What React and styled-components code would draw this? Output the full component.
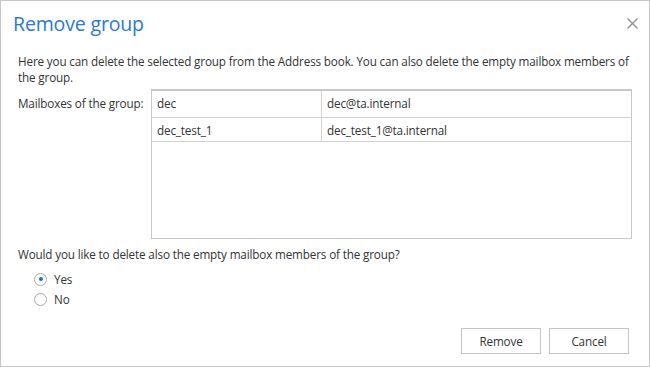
import React from 'react'
import styled, { createGlobalStyle } from 'styled-components'

const Global = createGlobalStyle`
  html, body {
    margin: 0;
    padding: 0;
    background: #ffffff;
  }
  * {
    box-sizing: border-box;
  }
`;

const Dialog = styled.div`
  width: 650px;
  height: 367px;
  border: 1px solid #c6c6c6;
  background: #fff;
  display: flex;
  flex-direction: column;
  font-family: 'Open Sans', 'Noto Sans', sans-serif;
  color: #333;
  position: relative;
`;

const Header = styled.div`
  display: flex;
  align-items: flex-start;
  justify-content: space-between;
  padding: 9px 10px 0 12px;
  height: 52px;
`;

const Title = styled.h1`
  margin: 0;
  font-size: 19.5px;
  font-weight: 400;
  line-height: 28px;
  color: #2b79cf;
  letter-spacing: -0.15px;
`;

const Close = styled.button`
  border: none;
  background: transparent;
  padding: 0;
  margin-top: 8px;
  width: 12px;
  height: 12px;
  cursor: pointer;
  display: flex;
`;

const Body = styled.div`
  flex: 1;
  padding: 0 17px;
  font-size: 11.7px;
  letter-spacing: -0.15px;
  line-height: 16px;
  display: flex;
  flex-direction: column;
`;

const Text = styled.p`
  margin: 0;
`;

const FieldRow = styled.div`
  display: grid;
  grid-template-columns: 133px 1fr;
  margin-top: 4px;
`;

const Label = styled.div`
  padding-top: 6px;
`;

const Table = styled.div`
  height: 150px;
  border: 1px solid #c8c8c8;
  border-top-width: 2px;
`;

const Row = styled.div`
  display: grid;
  grid-template-columns: 169px 1fr;
  height: ${p => p.$h}px;
  border-bottom: 1px solid #d2d2d2;
`;

const Cell = styled.div`
  padding: 4px 5px 0;
  border-left: ${p => (p.$first ? 'none' : '1px solid #d2d2d2')};
`;

const Question = styled(Text)`
  margin-top: 7px;
`;

const Radios = styled.div`
  display: flex;
  flex-direction: column;
  gap: 4px;
  padding-left: 16px;
  margin-top: 9px;
`;

const RadioRow = styled.label`
  display: flex;
  align-items: center;
  gap: 7px;
  height: 16px;
`;

const Circle = styled.span`
  width: 13px;
  height: 13px;
  border-radius: 50%;
  border: 1px solid #a8a8a8;
  display: flex;
  align-items: center;
  justify-content: center;
  &::after {
    content: '';
    width: 4px;
    height: 4px;
    border-radius: 50%;
    background: ${p => (p.$on ? '#1a73c8' : 'transparent')};
  }
`;

const Footer = styled.div`
  display: flex;
  justify-content: flex-end;
  gap: 8px;
  padding: 0 20px 12px;
`;

const Button = styled.button`
  width: 80px;
  height: 26px;
  border: 1px solid #c4c4c4;
  background: #fff;
  font-family: 'Open Sans', 'Noto Sans', sans-serif;
  font-size: 11.7px;
  letter-spacing: -0.15px;
  color: #333;
  cursor: pointer;
`;

const mailboxes = [
  { name: 'dec', mail: 'dec@ta.internal', h: 27 },
  { name: 'dec_test_1', mail: 'dec_test_1@ta.internal', h: 24 },
];

const App = () => {
  return (
    <>
      <Global />
      <Dialog>
        <Header>
          <Title>Remove group</Title>
          <Close aria-label="Close">
            <svg width="11" height="11" viewBox="0 0 11 11">
              <path d="M0.5 0.5 L10.5 10.5 M10.5 0.5 L0.5 10.5" stroke="#8a8a8a" strokeWidth="1.2" fill="none" />
            </svg>
          </Close>
        </Header>
        <Body>
          <Text>
            Here you can delete the selected group from the Address book. You can also delete the empty mailbox members of
            the group.
          </Text>
          <FieldRow>
            <Label>Mailboxes of the group:</Label>
            <Table>
              {mailboxes.map(m => (
                <Row key={m.name} $h={m.h}>
                  <Cell $first>{m.name}</Cell>
                  <Cell>{m.mail}</Cell>
                </Row>
              ))}
            </Table>
          </FieldRow>
          <Question>Would you like to delete also the empty mailbox members of the group?</Question>
          <Radios>
            <RadioRow>
              <Circle $on />
              Yes
            </RadioRow>
            <RadioRow>
              <Circle />
              No
            </RadioRow>
          </Radios>
        </Body>
        <Footer>
          <Button>Remove</Button>
          <Button>Cancel</Button>
        </Footer>
      </Dialog>
    </>
  )
}

export default App
